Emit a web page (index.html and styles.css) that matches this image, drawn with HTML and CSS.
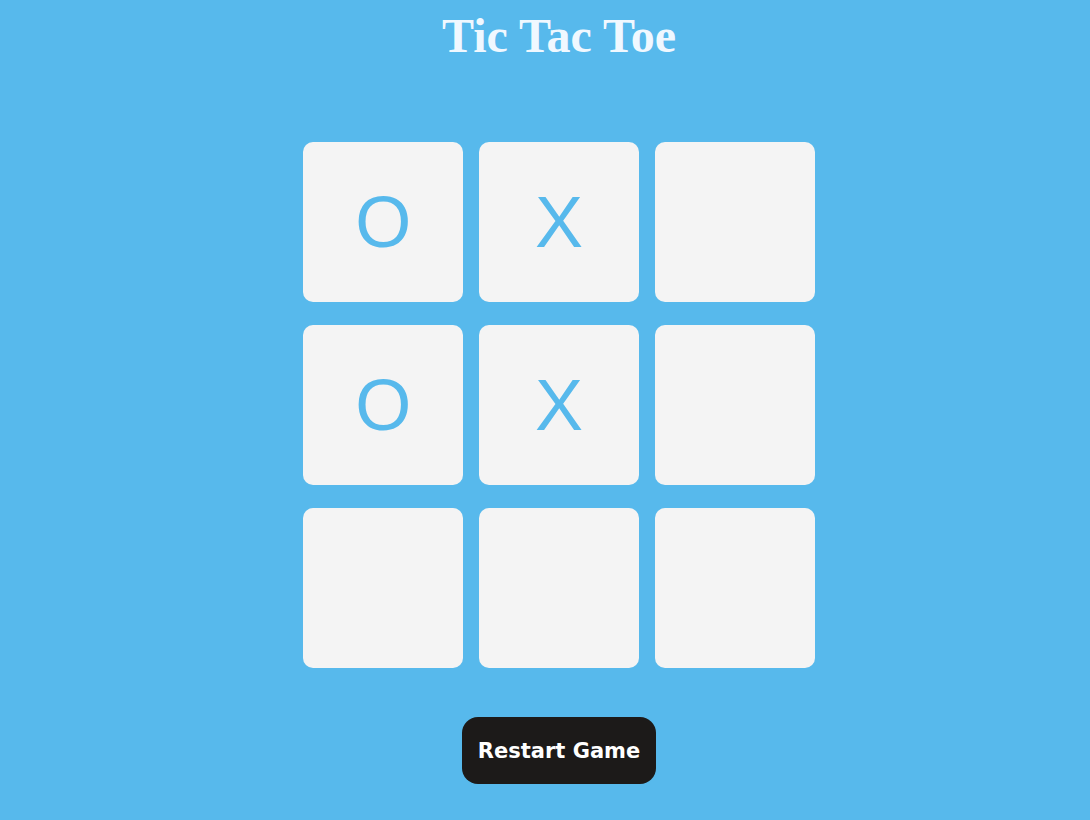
FILE: index.html
```html
<!DOCTYPE html>
<html>
<head>
<meta charset="utf-8">
<link rel="stylesheet" href="styles.css">
</head>
<body>
<main class="app">
  <h1 class="title">Tic Tac Toe</h1>
  <div class="board">
    <div class="cell">O</div>
    <div class="cell">X</div>
    <div class="cell"></div>
    <div class="cell">O</div>
    <div class="cell">X</div>
    <div class="cell"></div>
    <div class="cell"></div>
    <div class="cell"></div>
    <div class="cell"></div>
  </div>
  <button class="restart">Restart Game</button>
</main>
</body>
</html>
```
FILE: styles.css
```css
html, body {
  margin: 0;
  padding: 0;
  background: #57b9ec;
  height: 100%;
}
.app {
  display: flex;
  flex-direction: column;
  align-items: center;
  padding-left: 28px;
}
.title {
  margin: 8px 0 0;
  font-family: "Liberation Serif", serif;
  font-weight: bold;
  font-size: 48px;
  line-height: 56px;
  color: #f0f8ff;
}
.board {
  margin-top: 78px;
  width: 512px;
  display: grid;
  grid-template-columns: repeat(3, 1fr);
  grid-auto-rows: 160px;
  column-gap: 15.5px;
  row-gap: 23px;
}
.cell {
  background: #f4f4f4;
  border-radius: 10px;
  display: flex;
  align-items: center;
  justify-content: center;
  font-family: "Liberation Sans", Arial, sans-serif;
  font-size: 72px;
  color: #57b9ec;
}
.restart {
  margin-top: 49px;
  width: 194px;
  height: 67px;
  border: none;
  border-radius: 16px;
  background: #1c1a19;
  color: #ffffff;
  font-family: "Comic Sans MS", "DejaVu Sans", sans-serif;
  font-weight: bold;
  font-size: 21px;
}
```
